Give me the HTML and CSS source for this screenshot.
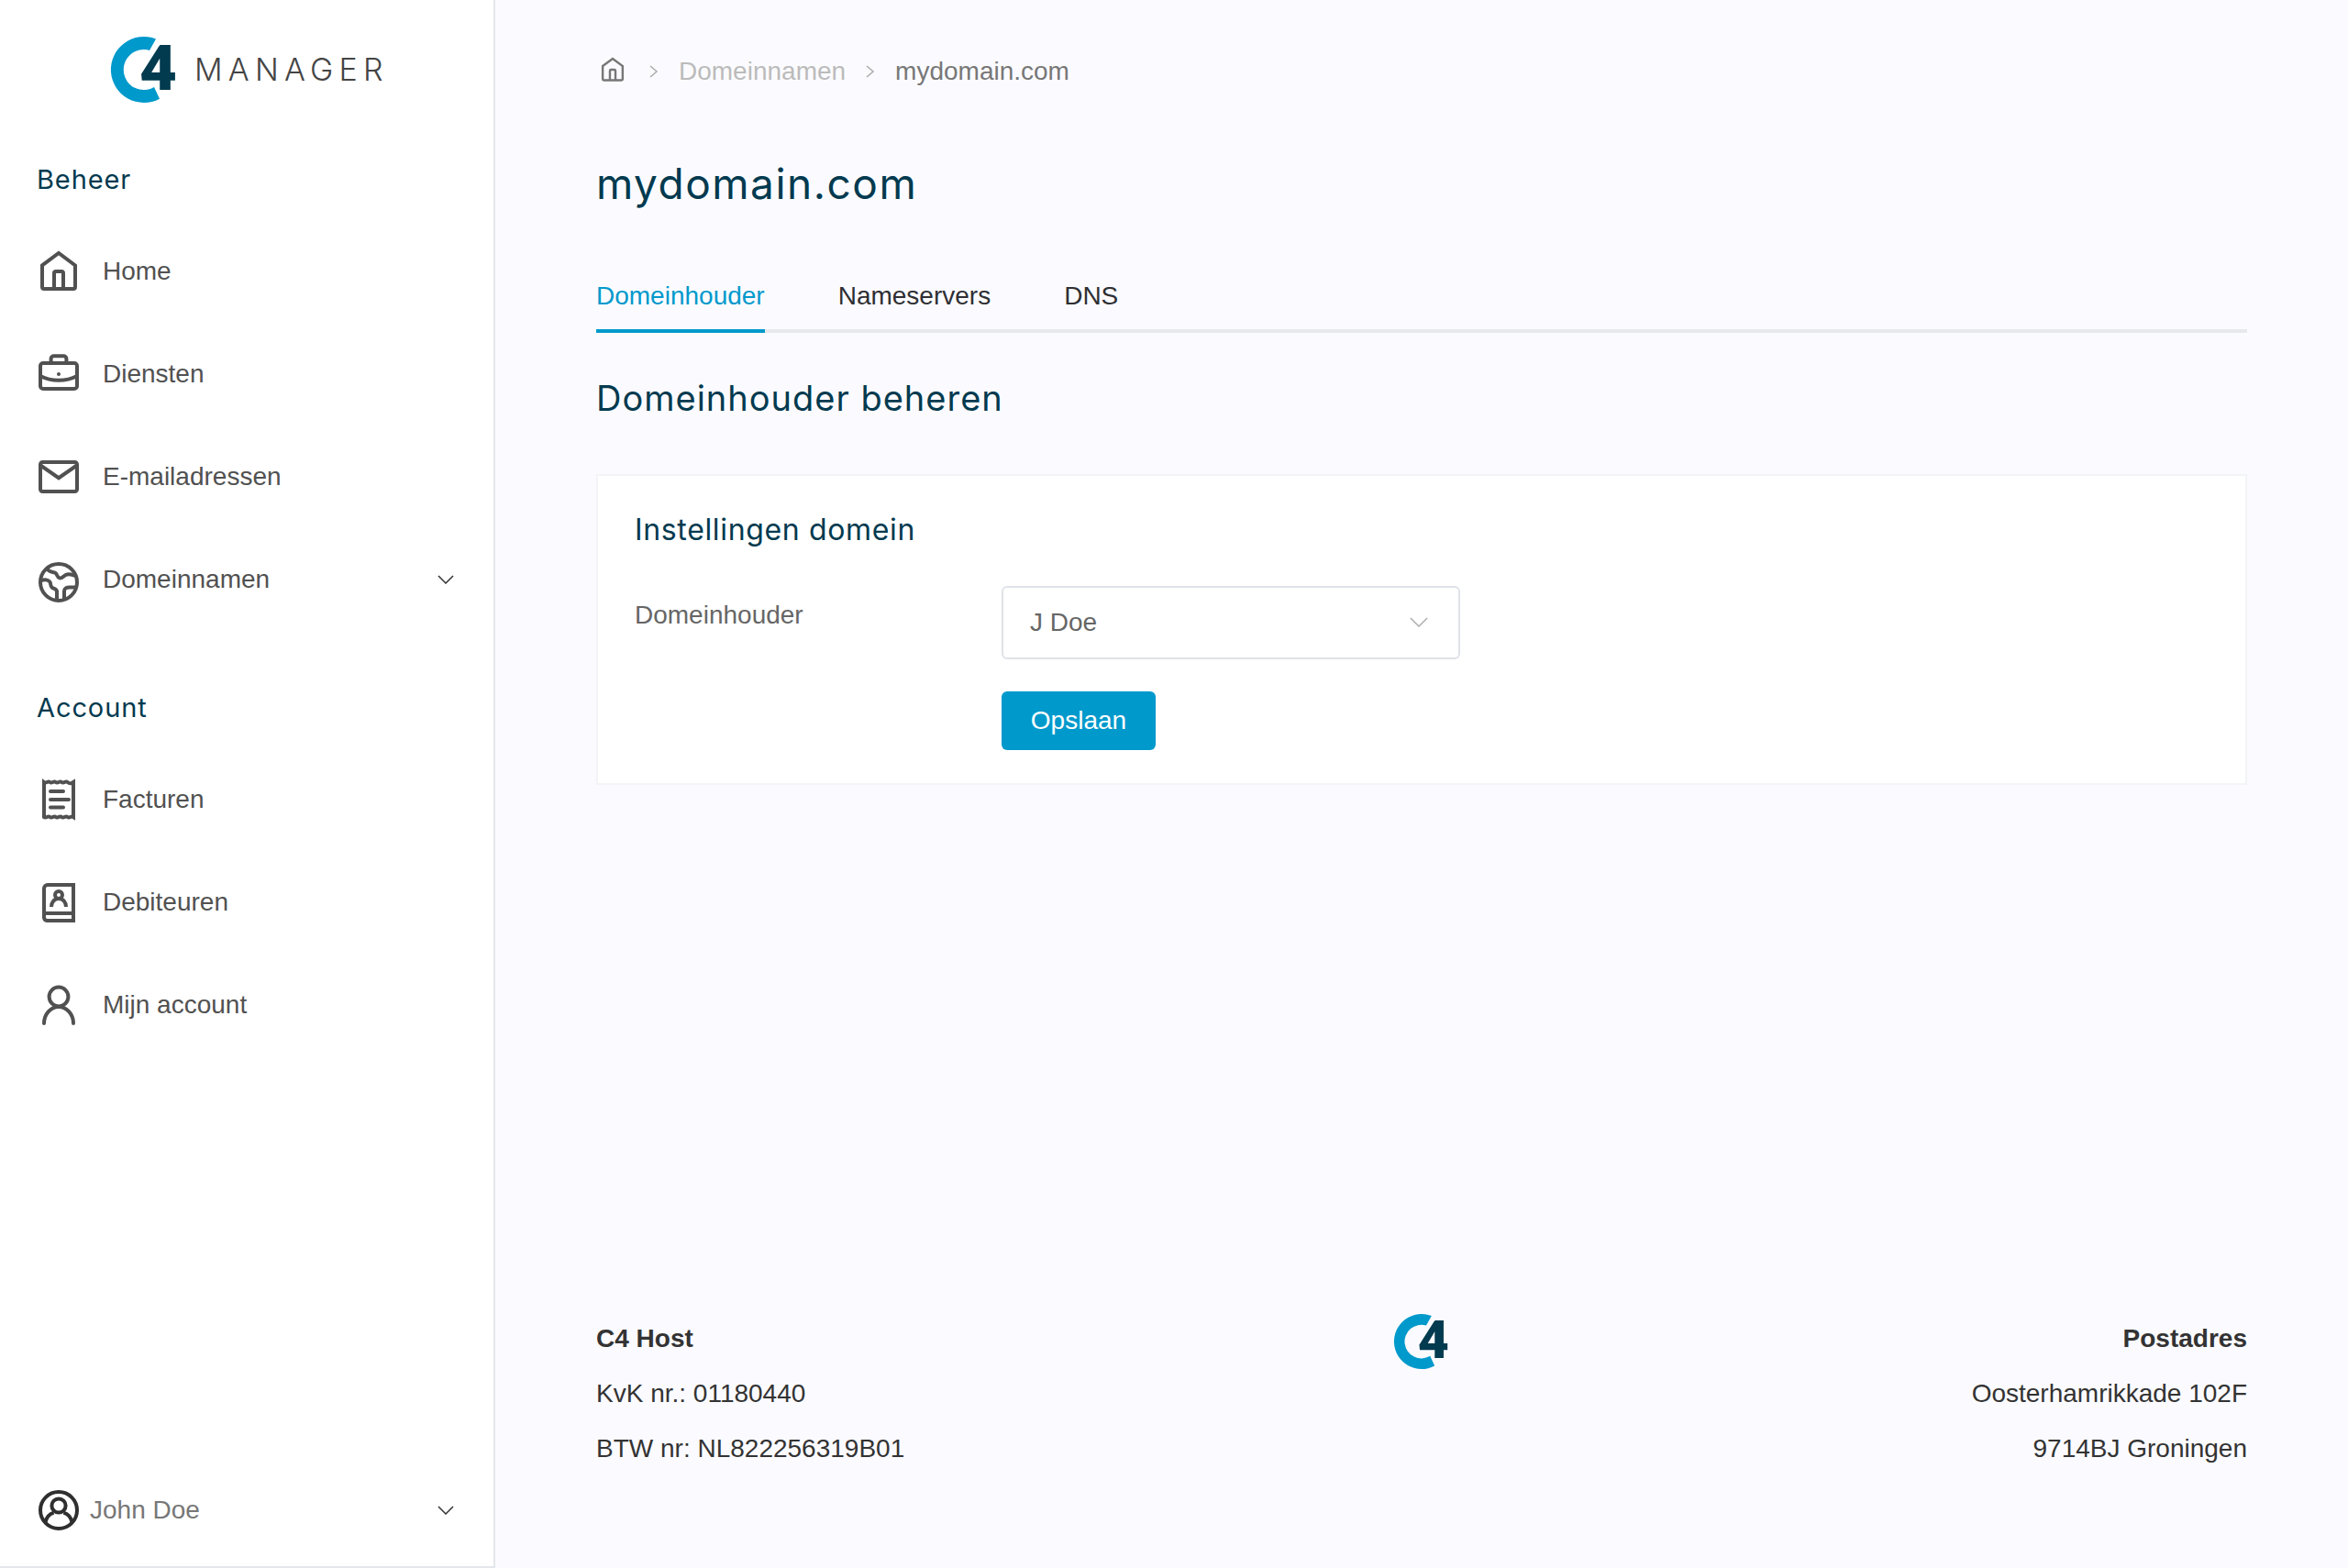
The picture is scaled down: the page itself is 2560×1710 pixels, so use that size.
FILE: index.html
```html
<!DOCTYPE html>
<html lang="nl">
<head>
<meta charset="utf-8">
<title>mydomain.com</title>
<link rel="stylesheet" href="styles.css">
</head>
<body>
<div class="shell">
  <aside class="sidebar">
    <div class="brand">
      <svg class="mark" viewBox="0 0 72 72"><path class="mark-c" d="M49 2.5A36 36 0 1 0 53 67.7L47 55A22 22 0 1 1 42 15Z"/><text class="mark-4" x="31" y="58" textLength="41" lengthAdjust="spacingAndGlyphs">4</text></svg>
      <span class="brand-name">MANAGER</span>
    </div>
    <h3 class="side-title">Beheer</h3>
    <nav class="nav">
      <a class="nav-item"><svg class="icon" viewBox="0 0 24 24"><path d="M3 8.700 12 2l9 6.700V20.500a1 1 0 0 1-1 1H4a1 1 0 0 1-1-1Z"/><path d="M9.500 21.500V13a1 1 0 0 1 1-1h3a1 1 0 0 1 1 1v8.500"/></svg><span>Home</span></a>
      <a class="nav-item"><svg class="icon" viewBox="0 0 24 24"><rect x="2" y="6" width="20" height="14" rx="1.500"/><path d="M7.800 6V3.600a1.500 1.500 0 0 1 1.500-1.500h5.400a1.500 1.500 0 0 1 1.500 1.500V6"/><path d="M2 13c6 3.200 14 3.200 20 0"/><circle class="fill" cx="12" cy="12" r="1"/></svg><span>Diensten</span></a>
      <a class="nav-item"><svg class="icon" viewBox="0 0 24 24"><rect x="2" y="4" width="20" height="16" rx="1.200"/><path d="M2.500 6 12 12.600 21.500 6"/></svg><span>E-mailadressen</span></a>
      <a class="nav-item"><svg class="icon" viewBox="0 -1.500 24 24"><circle cx="12" cy="12" r="10"/><path d="M5.500 4.500C7 6.800 8.800 6.200 10 6.800c1.300.7 1 2.300 2.300 2.800 1.700.6 2.300-1 3.500-1.600 1.500-.7 3.500-.3 5.200.5"/><path d="M2.500 11c1.800-.6 3.400-.5 4.500.6 1 1 .2 2.300 1.300 3.200 1 .8 2.400.6 2.700 2v4.700"/><path d="M15 21.500v-4.500c0-1.800 1.300-2.300 3-2.300h3.200"/></svg><span>Domeinnamen</span><svg class="chev" viewBox="0 0 18 10"><path d="M1 1l8 8 8-8"/></svg></a>
    </nav>
    <h3 class="side-title">Account</h3>
    <nav class="nav">
      <a class="nav-item"><svg class="icon" viewBox="0 0 24 24"><path d="M4 2.500c1.300 1 2-1 3.200 0s2-1 3.200 0 2-1 3.200 0 2-1 3.200 0 1.900.9 3.200 0v19c-1.300-.9-2 1-3.200 0s-2 1-3.200 0-2 1-3.200 0-2 1-3.200 0-1.900.9-3.200 0Z"/><path d="M7.500 7.500h7M7.500 12h10M7.500 16.200h7" stroke-linecap="round"/></svg><span>Facturen</span></a>
      <a class="nav-item"><svg class="icon" viewBox="0 0 24 24"><path d="M20 18V2.500H6a2 2 0 0 0-2 2V20.500a2 2 0 0 0 2 1.500h14V18H4"/><circle cx="12" cy="8" r="2"/><path d="M8 14.500c0-2.500 1.600-4.500 4-4.500s4 2 4 4.500"/></svg><span>Debiteuren</span></a>
      <a class="nav-item"><svg class="icon" viewBox="0 0 24 24"><circle cx="12" cy="7.500" r="5.200"/><path d="M4 22c0-4.800 3.500-9 8-9s8 4.200 8 9" stroke-linecap="round"/></svg><span>Mijn account</span></a>
    </nav>
    <div class="user">
      <svg class="icon icon-user" viewBox="0 0 24 24"><circle cx="12" cy="12" r="10"/><circle cx="12" cy="9.500" r="3.800"/><path d="M4.800 18.500c.5-2.800 2.300-4.500 4.500-5.200M19.200 18.500c-.5-2.800-2.300-4.500-4.500-5.200"/></svg>
      <span class="user-name">John Doe</span>
      <svg class="chev" viewBox="0 0 18 10"><path d="M1 1l8 8 8-8"/></svg>
    </div>
  </aside>
  <main class="main">
    <div class="crumbs">
      <svg class="crumb-home" viewBox="0 0 24 24"><path d="M3 8.700 12 2l9 6.700V20.500a1 1 0 0 1-1 1H4a1 1 0 0 1-1-1Z"/><path d="M9.500 21.500V13a1 1 0 0 1 1-1h3a1 1 0 0 1 1 1v8.500"/></svg>
      <svg class="crumb-sep" viewBox="0 0 12 16"><path d="M2 2l7 6-7 6"/></svg>
      <span class="crumb-link">Domeinnamen</span>
      <svg class="crumb-sep" viewBox="0 0 12 16"><path d="M2 2l7 6-7 6"/></svg>
      <span class="crumb-current">mydomain.com</span>
    </div>
    <h1 class="title">mydomain.com</h1>
    <div class="tabs">
      <a class="tab tab-active">Domeinhouder</a>
      <a class="tab">Nameservers</a>
      <a class="tab">DNS</a>
    </div>
    <h2 class="section">Domeinhouder beheren</h2>
    <section class="card">
      <h3 class="card-title">Instellingen domein</h3>
      <div class="form">
        <label class="form-label">Domeinhouder</label>
        <div class="select"><span>J Doe</span><svg class="select-chev" viewBox="0 0 22 13"><path d="M1 1l10 10L21 1"/></svg></div>
        <button class="btn">Opslaan</button>
      </div>
    </section>
    <footer class="footer">
      <div class="foot-col">
        <strong>C4 Host</strong>
        <span>KvK nr.: 01180440</span>
        <span>BTW nr: NL822256319B01</span>
      </div>
      <svg class="mark foot-mark" viewBox="0 0 72 72"><path class="mark-c" d="M49 2.500A36 36 0 1 0 53 67.700L47 55A22 22 0 1 1 42 15Z"/><text class="mark-4" x="31" y="58" textLength="41" lengthAdjust="spacingAndGlyphs">4</text></svg>
      <div class="foot-col foot-right">
        <strong>Postadres</strong>
        <span>Oosterhamrikkade 102F</span>
        <span>9714BJ Groningen</span>
      </div>
    </footer>
  </main>
</div>
</body>
</html>
```
FILE: styles.css
```css
* { box-sizing: border-box; }
html, body { margin: 0; height: 100%; }
body {
  background: #fbfbff;
  color: #333;
  font-family: "Liberation Sans", Arial, sans-serif;
  font-size: 28px;
  line-height: 40px;
}
h1, h2, h3 { margin: 0; font-family: Inter, "Noto Sans", sans-serif; font-weight: 400; color: #023a4f; }
.shell { display: flex; height: 100vh; }

.sidebar {
  flex: 0 0 540px;
  display: flex;
  flex-direction: column;
  padding: 40px 0 37px;
  background: #fff;
  border-right: 2px solid #e3e6ea;
  border-bottom: 2px solid #e3e6ea;
}
.brand { display: flex; align-items: center; height: 72px; margin-left: 121px; }
.mark { display: block; width: 72px; height: 72px; flex: none; overflow: visible; }
.mark-c { fill: #0099cc; }
.mark-4 { fill: #023a4f; font-family: Roboto, sans-serif; font-weight: 900; font-size: 69px; }
.brand-name {
  margin: 0 0 0 19px;
  font-family: Inter, sans-serif;
  font-size: 34px;
  font-weight: 300;
  letter-spacing: 6.2px;
  color: #444;
}
.side-title { margin: 64px 0 24px 40px; font-size: 29px; line-height: 40px; letter-spacing: .9px; }
.nav-item { display: flex; align-items: center; gap: 24px; height: 112px; padding: 0 40px; color: #515151; }
.icon { flex: none; width: 48px; height: 48px; fill: none; stroke: #515151; stroke-width: 2; overflow: visible; }
.icon .fill { fill: #515151; stroke: none; }
.chev { flex: none; width: 18px; height: 10px; margin-left: auto; margin-right: 3.5px; fill: none; stroke: #333; stroke-width: 1.5; }
.user { display: flex; align-items: center; gap: 10px; margin-top: auto; padding: 0 40px; }
.icon-user { stroke: #2f2f2f; }
.user-name { color: #777; }

.main { flex: 1; min-width: 0; display: flex; flex-direction: column; padding: 57px 110px 100px; }
.crumbs { display: flex; align-items: center; gap: 21px; height: 41px; }
.crumb-home { width: 36px; height: 36px; margin-top: -4px; padding: 3.500px; fill: none; stroke: #777; stroke-width: 2; }
.crumb-sep { width: 12px; height: 16px; fill: none; stroke: #aaa; stroke-width: 1.5; }
.crumb-link { color: #bbb; }
.crumb-current { color: #777; }
.title { margin-top: 72px; font-size: 46px; line-height: 60px; letter-spacing: 1.5px; }
.tabs { display: flex; gap: 80px; margin-top: 73px; border-bottom: 4px solid #e6e8ec; }
.tab { padding-bottom: 16px; margin-bottom: -4px; border-bottom: 4px solid transparent; color: #2f2f33; }
.tab-active { color: #0099cc; border-bottom-color: #0099cc; }
.section { margin-top: 51px; font-size: 38px; line-height: 40px; letter-spacing: 1px; }
.card { margin-top: 63px; padding: 39px 40px 36px; background: #fff; border: 2px solid #f3f4f7; }
.card-title { font-size: 32px; line-height: 40px; letter-spacing: .65px; }
.form { display: grid; grid-template-columns: 400px 500px; row-gap: 35px; margin-top: 41px; }
.form-label { padding-top: 12px; color: #666; }
.select {
  display: flex;
  align-items: center;
  justify-content: space-between;
  grid-column: 2;
  height: 80px;
  padding: 0 33px 0 29px;
  border: 2px solid #dfe2e8;
  border-radius: 6px;
  background: #fff;
  color: #666;
}
.select-chev { width: 20px; height: 12px; fill: none; stroke: #aaa; stroke-width: 1.5; }
.btn {
  grid-column: 2;
  justify-self: start;
  width: 168px;
  height: 64px;
  padding: 0;
  border: 0;
  border-radius: 6px;
  background: #0099cc;
  color: #fff;
  font: inherit;
}
.footer { display: grid; grid-template-columns: 1fr auto 1fr; margin-top: auto; color: #333; }
.foot-col { display: flex; flex-direction: column; line-height: 60px; }
.foot-col span, .foot-col strong { display: block; }
.foot-right { text-align: right; }
.foot-mark { width: 60px; height: 60px; margin-top: 3px; }
```
